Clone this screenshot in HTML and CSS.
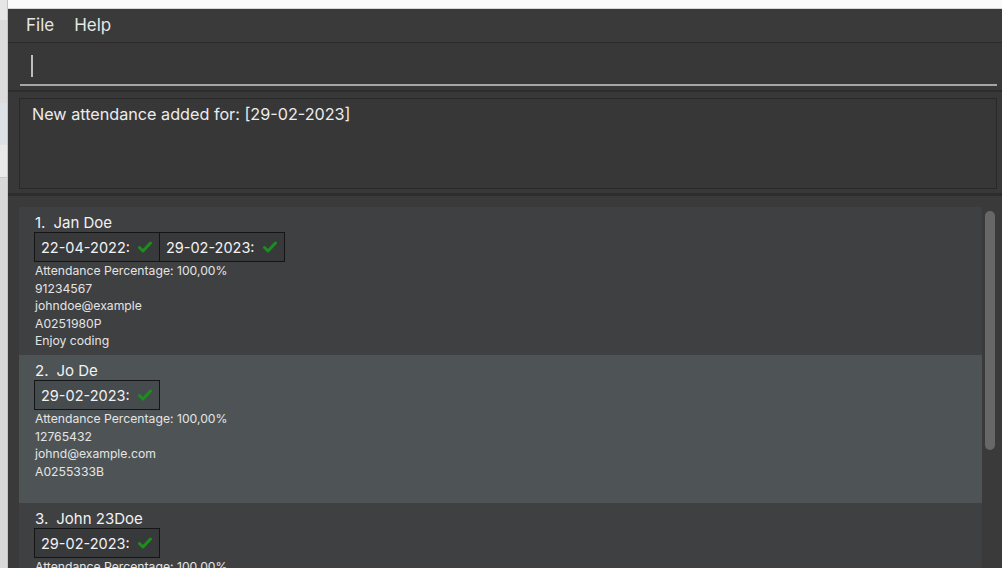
FILE: index.html
```html
<!DOCTYPE html>
<html>
<head>
<meta charset="utf-8">
<link rel="stylesheet" href="styles.css">
</head>
<body>
<div class="frame">
  <div class="side">
    <div class="side-top"></div>
    <div class="side-a"></div>
    <div class="side-b"></div>
    <div class="side-c"></div>
    <div class="side-d"></div>
  </div>
  <div class="main">
    <div class="topstrip"></div>
    <div class="app">
      <div class="menubar">
        <span class="menu">File</span>
        <span class="menu">Help</span>
      </div>
      <div class="command">
        <div class="field"><span class="caret"></span></div>
      </div>
      <div class="result-wrap">
        <div class="result">New attendance added for: [29-02-2023]</div>
      </div>
      <div class="list">
        <div class="cells">
          <div class="cell">
            <div class="name"><span class="idx">1.</span>Jan Doe</div>
            <div class="tags">
              <div class="tag">22-04-2022:<svg class="check" viewBox="0 0 14 12"><path d="M1.5 6.5 L5 10 L12.5 2"/></svg></div>
              <div class="tag">29-02-2023:<svg class="check" viewBox="0 0 14 12"><path d="M1.5 6.5 L5 10 L12.5 2"/></svg></div>
            </div>
            <div class="detail">Attendance Percentage: 100,00%</div>
            <div class="detail">91234567</div>
            <div class="detail">johndoe@example</div>
            <div class="detail">A0251980P</div>
            <div class="detail">Enjoy coding</div>
          </div>
          <div class="cell selected">
            <div class="name"><span class="idx">2.</span>Jo De</div>
            <div class="tags">
              <div class="tag">29-02-2023:<svg class="check" viewBox="0 0 14 12"><path d="M1.5 6.5 L5 10 L12.5 2"/></svg></div>
            </div>
            <div class="detail">Attendance Percentage: 100,00%</div>
            <div class="detail">12765432</div>
            <div class="detail">johnd@example.com</div>
            <div class="detail">A0255333B</div>
          </div>
          <div class="cell">
            <div class="name"><span class="idx">3.</span>John 23Doe</div>
            <div class="tags">
              <div class="tag">29-02-2023:<svg class="check" viewBox="0 0 14 12"><path d="M1.5 6.5 L5 10 L12.5 2"/></svg></div>
            </div>
            <div class="detail">Attendance Percentage: 100,00%</div>
          </div>
        </div>
        <div class="scroll"><div class="thumb"></div></div>
      </div>
    </div>
  </div>
</div>
</body>
</html>
```

FILE: styles.css
```css
* { box-sizing: border-box; }
html, body {
  margin: 0;
  padding: 0;
  width: 1002px;
  height: 568px;
  overflow: hidden;
  background: #f4f4f4;
  font-family: "Inter", "Noto Sans", sans-serif;
}
.frame {
  display: flex;
  width: 1002px;
  height: 568px;
}
.side {
  width: 8px;
  display: flex;
  flex-direction: column;
  background: #dadada;
  border-right: 1px solid #c4c4c4;
}
.side-top { height: 20px; background: #e6e6e6; }
.side-a { height: 83px; background: #dcdcdc; }
.side-b { height: 42px; background: #dde1e8; }
.side-c { height: 33px; background: #e9e9e9; border-bottom: 1px solid #c8c8c8; }
.side-d { flex: 1; background: #d9d9d9; }
.main {
  flex: 1;
  display: flex;
  flex-direction: column;
  min-width: 0;
}
.topstrip {
  height: 9px;
  flex: none;
  background: #fafafa;
  border-bottom: 1px solid #d6d6d6;
}
.app {
  flex: 1;
  display: flex;
  flex-direction: column;
  background: #383838;
  min-height: 0;
}
.menubar {
  height: 34px;
  flex: none;
  display: flex;
  align-items: center;
  padding: 0 0 1px 18px;
  gap: 20px;
  background: #3a3a3a;
  border-bottom: 1px solid #2b2b2b;
  color: #e6e6e6;
  font-size: 17px;
}
.command {
  height: 49px;
  flex: none;
  padding: 0 5px 0 12px;
  border-bottom: 2px solid #2d2d2d;
}
.field {
  height: 43px;
  border-bottom: 2px solid #a6a6a6;
  padding: 12px 0 0 11px;
}
.caret {
  display: block;
  width: 2px;
  height: 22px;
  background: #bdbdbd;
}
.result-wrap {
  height: 104px;
  flex: none;
  padding: 6px 5px 0 11px;
  border-bottom: 3px solid #2d2d2d;
}
.result {
  height: 91px;
  border: 1px solid #282828;
  background: #373737;
  color: #ececec;
  font-size: 16.2px;
  line-height: 20px;
  padding: 5px 0 0 12px;
}
.list {
  flex: 1;
  display: flex;
  min-height: 0;
  background: #3a3a3a;
  padding: 11px 0 0 11px;
  overflow: hidden;
}
.cells {
  width: 963px;
  display: flex;
  flex-direction: column;
}
.cell {
  height: 148px;
  flex: none;
  background: #3f4042;
  padding: 7px 0 0 15px;
  color: #f2f2f2;
}
.cell.selected { background: #4e5456; }
.name {
  font-size: 15px;
  line-height: 18px;
  padding-left: 1px;
}
.idx { margin-right: 8px; }
.tags { display: flex; }
.tag {
  height: 30px;
  display: flex;
  align-items: center;
  padding: 0 7px 0 6px;
  gap: 8px;
  border: 1px solid #151515;
  background: rgba(0, 0, 0, 0.1);
  font-size: 14.5px;
  color: #f2f2f2;
  margin-right: -1px;
}
.check {
  width: 14px;
  height: 12px;
}
.check path {
  fill: none;
  stroke: #1b8f1b;
  stroke-width: 3;
  stroke-linecap: round;
  stroke-linejoin: round;
}
.detail {
  font-size: 12.2px;
  line-height: 17.5px;
  color: #e4e4e4;
  padding-left: 1px;
}
.scroll {
  width: 20px;
  padding: 4px 7px 0 3px;
}
.thumb {
  width: 10px;
  height: 239px;
  border-radius: 5px;
  background: #676767;
}
```
